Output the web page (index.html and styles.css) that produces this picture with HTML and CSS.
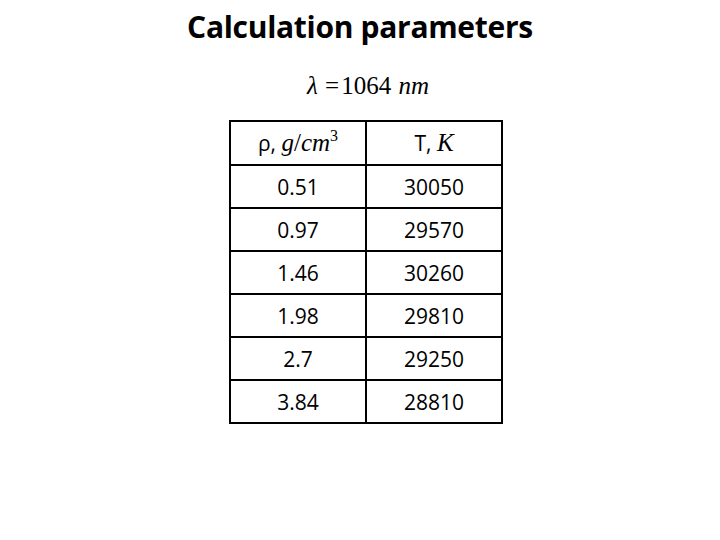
FILE: index.html
```html
<!DOCTYPE html>
<html>
<head>
<meta charset="utf-8">
<link rel="stylesheet" href="styles.css">
</head>
<body>
<div class="slide">
  <h1 class="title">Calculation parameters</h1>
  <div class="formula"><span class="it">λ</span> <span class="eq">=</span>1064 <span class="it">nm</span></div>
  <table class="params">
    <tr class="head">
      <td>ρ, <span class="math">g</span><span class="math up">/</span><span class="math">cm</span><sup class="math up">3</sup></td>
      <td>T, <span class="math">K</span></td>
    </tr>
    <tr><td>0.51</td><td>30050</td></tr>
    <tr><td>0.97</td><td>29570</td></tr>
    <tr><td>1.46</td><td>30260</td></tr>
    <tr><td>1.98</td><td>29810</td></tr>
    <tr><td>2.7</td><td>29250</td></tr>
    <tr><td>3.84</td><td>28810</td></tr>
  </table>
</div>
</body>
</html>
```

FILE: styles.css
```css
html, body {
  margin: 0;
  padding: 0;
  background: #fff;
}
.slide {
  width: 720px;
  height: 540px;
  display: flex;
  flex-direction: column;
  align-items: center;
}
.title {
  margin: 8px 0 0 0;
  font-family: "Open Sans", "Liberation Sans", sans-serif;
  font-weight: 700;
  font-size: 30px;
  line-height: 38px;
  color: #000;
  letter-spacing: -0.3px;
}
.formula {
  margin-top: 27px;
  margin-left: 16px;
  font-family: "Liberation Serif", serif;
  font-size: 25px;
  line-height: 26px;
  color: #000;
  word-spacing: 1px;
}
.formula .it {
  font-style: italic;
}
.formula .eq {
  margin-right: 2px;
}
.params {
  margin-top: 21px;
  margin-left: 12px;
  border-collapse: collapse;
  font-family: "Open Sans", "Liberation Sans", sans-serif;
  font-size: 21px;
  color: #000;
}
.params td {
  border: 2px solid #000;
  width: 134px;
  height: 41px;
  padding: 0;
  text-align: center;
  vertical-align: middle;
}
.params .head td {
  height: 42px;
}
.math {
  font-family: "Liberation Serif", serif;
  font-style: italic;
  font-size: 25px;
}
.math.up {
  font-style: normal;
}
sup.math {
  font-size: 16px;
  vertical-align: 10px;
  line-height: 0;
}
```
